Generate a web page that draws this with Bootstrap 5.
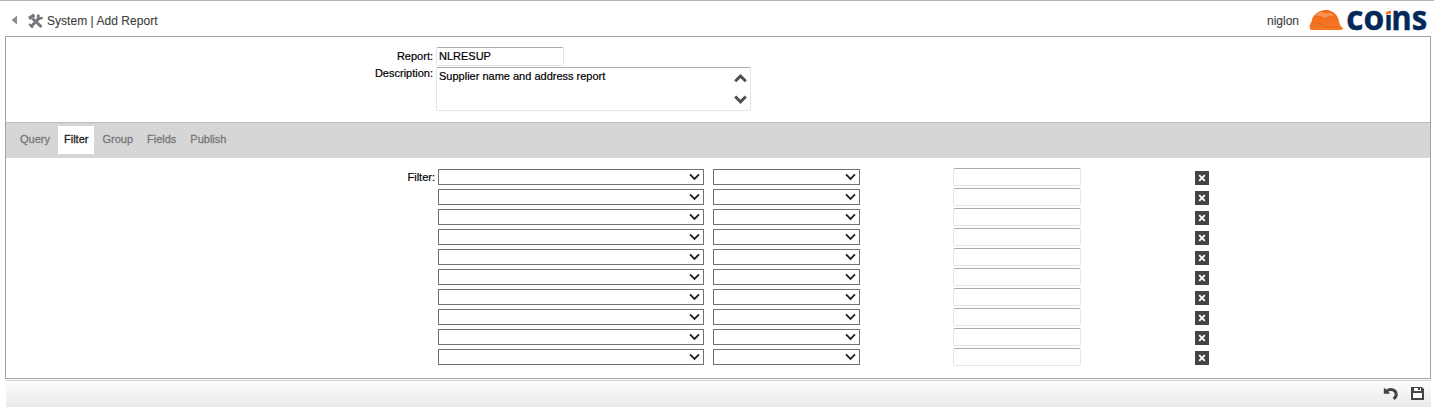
<!DOCTYPE html>
<html lang="en">
<head>
<meta charset="utf-8">
<title>Add Report</title>
<link rel="stylesheet" href="https://cdn.jsdelivr.net/npm/bootstrap@5.3.0/dist/css/bootstrap.min.css">
<style>
body{font:11px/13px "Liberation Sans",Arial,sans-serif;color:#000;background:#fff;overflow:hidden}
.page{height:407px;border-top:1px solid #b5b5b5}
.topbar{height:35px;padding:0 7px 0 11px;font-size:12px;line-height:14px;color:#3c3c3c;-webkit-text-stroke:.1px}
.topbar svg{-webkit-text-stroke:0}
.panel{height:343px;margin:0 3px 0 5px;border:1px solid #a3a3a3}
.lbl{width:428px;padding-right:1px;text-align:right;line-height:13px;-webkit-text-stroke:.2px}
.box{border:1px solid #e2e5ec;border-top-color:#ababb3;border-radius:2px;background:#fff;color:#000;padding:0 2px;font-size:11px;box-shadow:none;-webkit-text-stroke:.2px}
.text-in{width:128px;height:19px;padding-bottom:1px}
.area{width:315px;height:44px;padding:2px 3px 0 2px}
.head{height:85px;padding-top:10px}
.tabs{height:36px;gap:2px;background:#d6d6d6;border-top:1px solid #bcbcbc;padding:3px 0 0 8px}
.tabs .nav-link{height:28px;padding:7px 6px 0;color:#777;line-height:13px;border-radius:0;-webkit-text-stroke:.3px}
.tabs .nav-link.active{background:#fff;color:#222}
.filters{padding-top:10px}
.filter-row{height:20px}
.filter-row .text-in{height:18px}
.pick{height:16px;border:1px solid #707070;border-radius:0;background:#fff;padding:0 3px 0 0;margin-top:1px}
.pick-field{width:266px;margin-right:9px}
.pick-op{width:147px;margin-right:93px}
.del{width:14px;height:14px;background:#444;border:0;padding:0;margin:3px 0 0 114px}
.footbar{height:27px;margin:1px 3px 0 6px;background:linear-gradient(#fdfdfd,#e9e9e9);border-top:1px solid #d0d0d0;padding-right:7px}
svg{display:block;flex:none}
</style>
<script defer src="https://cdn.jsdelivr.net/npm/bootstrap@5.3.0/dist/js/bootstrap.bundle.min.js"></script>
</head>
<body>
<div class="page">
  <header class="topbar d-flex align-items-start">
    <svg width="7" height="10" viewBox="0 0 7 10" style="margin-top:14px"><path d="M6 .8v8.600L.5 5z" fill="#8c8c8c"/></svg>
    <svg width="16" height="16" viewBox="0 0 16 16" style="margin:12px 0 0 10px">
      <g fill="none" stroke="#777"><path d="M4.500 5.500 13.500 14" stroke-width="3"/><path d="M2.500 14 11.500 5" stroke-width="3"/><path d="M1 5.500 6.500 2" stroke-width="3.600"/><path d="M10.500 1.500 10 5.500 14.700 5" stroke-width="2.600"/><path d="M1 11 5 14.700" stroke-width="1.800"/></g>
    </svg>
    <span style="margin:13px 0 0 3px;letter-spacing:.04px">System | Add Report</span>
    <span class="ms-auto" style="margin-top:13px">niglon</span>
    <svg width="118" height="32" viewBox="0 0 118 32" overflow="visible" style="margin:2px 0 0 10px" font-family="Open Sans,sans-serif" font-weight="700" fill="#03295a" stroke="#03295a" stroke-width=".4">
      <defs><linearGradient id="hat" x2="0" y2="1"><stop stop-color="#ee6718"/><stop offset="1" stop-color="#f47a25"/></linearGradient></defs>
      <g stroke="none"><path d="M1 26C.2 23 1 20.500 2.500 19 3 13 8 8 15 7.200c8-1 14 4 15.500 13 .5 2 2 3.800 4 5.300-1 1.400-3 1.500-6 1.500H4c-1.500 0-2.700-.1-3-1z" fill="url(#hat)"/>
      <path d="M6 12.500C9 9.500 11 8.800 13.500 8.800 15 10.400 18 10.900 21 9.600c2 1 3 2 3.500 3.400-4 0-6 0-8.500 2-2.500-1.500-6-3-10-2.500z" fill="#f69254"/></g>
      <path d="M2.500 20c7-2.500 11 4 18 4.500 4 .2 6-1 9-1" fill="none" stroke="#e35f14" stroke-width=".7"/>
      <text x="37.300" y="26.500" font-size="33.500" textLength="38" lengthAdjust="spacingAndGlyphs">co</text>
      <text x="75.600" y="26.700" font-size="26" textLength="8" lengthAdjust="spacingAndGlyphs">i</text>
      <text x="82.300" y="26.700" font-size="33.500" textLength="36" lengthAdjust="spacingAndGlyphs">ns</text>
      <g stroke="none"><path d="M76 6h7.500v5.500H76z" fill="#fff"/><path d="M77.200 8.800 82 7.500v2.700l-4.800 1.500z" fill="#f37021"/></g>
    </svg>
  </header>

  <main class="panel">
    <section class="head">
      <div class="d-flex"><label class="lbl pt-1" style="margin-top:-1px">Report:</label><input class="box text-in" style="margin-left:2px" value="NLRESUP"></div>
      <div class="d-flex" style="margin-top:1px"><label class="lbl">Description:</label>
        <div class="box area d-flex justify-content-between" style="margin-left:2px"><span>Supplier name and address report</span>
          <svg width="13" height="38" viewBox="0 0 13 38" fill="none" stroke="#505050" stroke-width="3"><path d="m1.200 11.300 5.300-5.300 5.300 5.300M1.200 26.500l5.300 5.300 5.300-5.300"/></svg>
        </div></div>
    </section>
    <nav class="nav tabs flex-nowrap">
      <a class="nav-link">Query</a><a class="nav-link active">Filter</a><a class="nav-link">Group</a><a class="nav-link">Fields</a><a class="nav-link">Publish</a>
    </nav>
    <section class="filters" id="filters"></section>
  </main>

  <footer class="footbar d-flex justify-content-end align-items-start">
    <svg width="16" height="14" viewBox="0 0 16 14" style="margin:5px 12px 0 0"><path d="M3.500 5C8 2 13.200 4 13.200 8.400c0 2-1 3.300-2.700 4.300" fill="none" stroke="#444" stroke-width="3"/><path d="M.8 1.500v6.300h6.500z" fill="#444"/></svg>
    <svg width="13" height="13" viewBox="0 0 13 13" style="margin-top:6px"><path d="M0 0h11l2 2v11H0z" fill="#444"/><path d="M3 1h7v3H3zM2 6h9v5H2z" fill="#fff"/><path d="M7 1h2v2H7z" fill="#444"/></svg>
  </footer>
</div>
<template id="row">
  <div class="filter-row d-flex align-items-start">
    <label class="lbl" style="width:430px;padding-top:3px"></label>
    <div class="pick pick-field d-flex justify-content-end" style="margin-left:2px"><svg width="11" height="14" viewBox="0 0 11 14"><path d="m1 4.300 4.500 4.500L10 4.300" fill="none" stroke="#222" stroke-width="1.900"/></svg></div>
    <div class="pick pick-op d-flex justify-content-end"><svg width="11" height="14" viewBox="0 0 11 14"><path d="m1 4.300 4.500 4.500L10 4.300" fill="none" stroke="#222" stroke-width="1.900"/></svg></div>
    <input class="box text-in" aria-label="Value">
    <button class="del" aria-label="Remove"><svg width="14" height="14" viewBox="0 0 14 14"><path d="m4.200 4.200 5.600 5.600m0-5.600-5.600 5.600" stroke="#fff" stroke-width="1.900"/></svg></button>
  </div>
</template>
<script>
const list = document.getElementById('filters');
for (let i = 0; i < 10; i++) {
  const row = document.getElementById('row').content.cloneNode(true);
  if (i === 0) row.querySelector('label').textContent = 'Filter:';
  list.append(row);
}
</script>
</body>
</html>
